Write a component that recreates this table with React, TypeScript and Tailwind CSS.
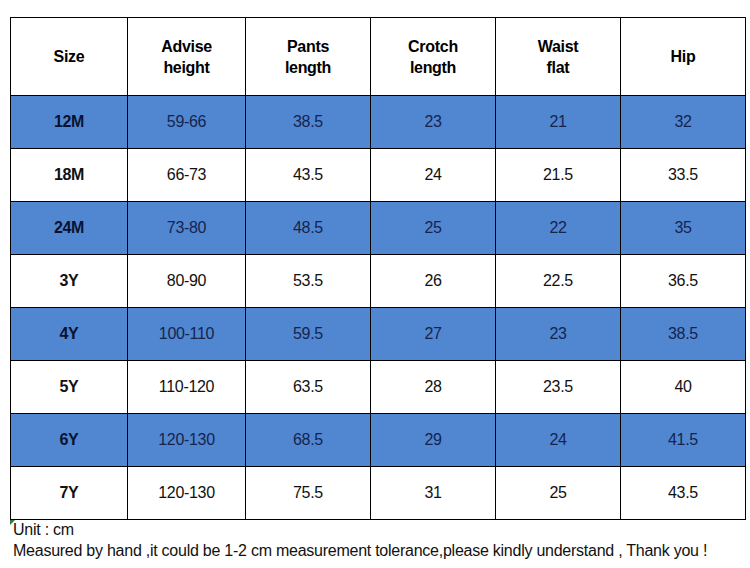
import React from "react";

const rows = [
  ["12M", "59-66", "38.5", "23", "21", "32"],
  ["18M", "66-73", "43.5", "24", "21.5", "33.5"],
  ["24M", "73-80", "48.5", "25", "22", "35"],
  ["3Y", "80-90", "53.5", "26", "22.5", "36.5"],
  ["4Y", "100-110", "59.5", "27", "23", "38.5"],
  ["5Y", "110-120", "63.5", "28", "23.5", "40"],
  ["6Y", "120-130", "68.5", "29", "24", "41.5"],
  ["7Y", "120-130", "75.5", "31", "25", "43.5"],
];

const headers: [string, string | null][] = [
  ["Size", null],
  ["Advise", "height"],
  ["Pants", "length"],
  ["Crotch", "length"],
  ["Waist", "flat"],
  ["Hip", null],
];

export default function App() {
  return (
    <div
      className="w-[750px] h-[568px] bg-white overflow-hidden pt-[17px] pl-[10px]"
      style={{ fontFamily: '"Liberation Sans", Arial, sans-serif' }}
    >
      <table className="border-collapse table-fixed w-[735px] text-[16px] tracking-[-0.3px]">
        <colgroup>
          <col className="w-[117px]" />
          <col className="w-[118px]" />
          <col className="w-[125px]" />
          <col className="w-[125px]" />
          <col className="w-[125px]" />
          <col className="w-[125px]" />
        </colgroup>
        <thead>
          <tr className="h-[78px]">
            {headers.map(([a, b], i) => (
              <th
                key={i}
                className="border border-black font-bold text-black text-center align-middle leading-[21px] p-0"
              >
                {a}
                {b && <br />}
                {b}
              </th>
            ))}
          </tr>
        </thead>
        <tbody>
          {rows.map((r, ri) => {
            const blue = ri % 2 === 0;
            return (
              <tr key={ri} className={blue ? "h-[53px] bg-[#5187d1]" : "h-[53px] bg-white"}>
                {r.map((c, ci) => (
                  <td
                    key={ci}
                    className={
                      "border border-black text-center align-middle p-0 " +
                      (ci === 0 ? "font-bold " : "") +
                      (blue ? (ci === 0 ? "text-[#0a1230]" : "text-[#15244f]") : "text-[#111]")
                    }
                  >
                    {c}
                  </td>
                ))}
              </tr>
            );
          })}
        </tbody>
      </table>
      <div className="relative pl-[3px] text-[16px] leading-[21px] text-[#111] tracking-[-0.25px] -mt-[1px]">
        <div className="absolute left-0 top-[1px] w-0 h-0 border-t-[5px] border-r-[5px] border-t-[#2e7d32] border-r-transparent" />
        <div>Unit : cm</div>
        <div>Measured by hand ,it could be 1-2 cm measurement tolerance,please kindly understand , Thank you !</div>
      </div>
    </div>
  );
}
